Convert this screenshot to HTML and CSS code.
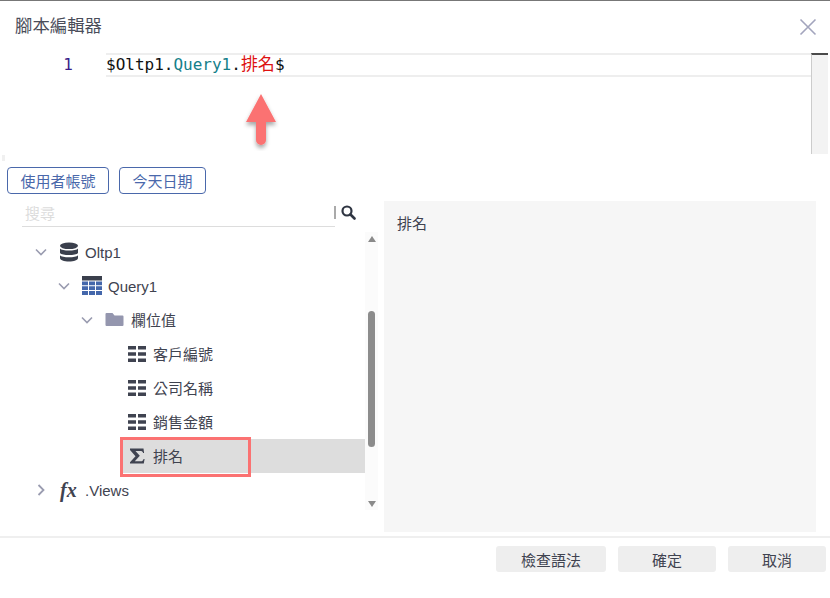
FILE: index.html
```html
<!DOCTYPE html>
<html lang="zh-Hant">
<head>
<meta charset="utf-8">
<title>腳本編輯器</title>
<link rel="stylesheet" href="styles.css">
</head>
<body>
<div class="dialog">
  <header class="head">
    <h1 class="title">腳本編輯器</h1>
    <svg class="close" width="18" height="18" viewBox="0 0 18 18"><path d="M1.500 1.500 16.500 16.500M16.500 1.500 1.500 16.500" stroke="#a3a5bd" stroke-width="1.600" fill="none"/></svg>
  </header>
  <section class="editor">
    <div class="gutter">1</div>
    <div class="lines">
      <div class="line"><span class="plain">$Oltp1.</span><span class="teal">Query1</span><span class="plain">.</span><span class="red">排名</span><span class="plain">$</span></div>
    </div>
    <div class="vbar"></div>
  </section>
  <div class="tools">
    <button class="chip chip-a">使用者帳號</button>
    <button class="chip chip-b">今天日期</button>
  </div>
  <main class="body">
    <div class="left">
      <div class="search">
        <div class="search-input">搜尋</div>
        <div class="search-sep"></div>
        <svg class="search-icon" width="15" height="15" viewBox="0 0 15 15"><circle cx="6" cy="6" r="4.500" fill="none" stroke="#2f3542" stroke-width="2.200"/><path d="M9.500 9.500 13.500 13.500" stroke="#2f3542" stroke-width="2.600" stroke-linecap="round"/></svg>
      </div>
      <div class="tree-wrap">
        <ul class="tree">
          <li class="node lvl0">
            <svg class="caret" width="12" height="12" viewBox="0 0 12 12"><path d="M1 3.500 6 8.500 11 3.500" fill="none" stroke="#9a9cb0" stroke-width="1.600"/></svg>
            <svg class="icon" width="20" height="20" viewBox="0 0 20 20"><g fill="#3a3f4c"><ellipse cx="10" cy="3.800" rx="9" ry="3.300"/><path d="M1 6.500C3 9.300 17 9.300 19 6.500V11C17 13.800 3 13.800 1 11Z"/><path d="M1 13.200C3 16 17 16 19 13.200V16C19 18 15 19.500 10 19.500S1 18 1 16Z"/></g></svg>
            <span>Oltp1</span>
          </li>
          <li class="node lvl1">
            <svg class="caret" width="12" height="12" viewBox="0 0 12 12"><path d="M1 3.500 6 8.500 11 3.500" fill="none" stroke="#9a9cb0" stroke-width="1.600"/></svg>
            <svg class="icon" width="20" height="20" viewBox="0 0 20 20"><rect y="0" width="20" height="4.500" fill="#3a3f4c"/><path fill="#4467ab" d="M0 5.500h6v3.800H0zM7 5.500h6v3.800H7zM14 5.500h6v3.800h-6zM0 10.300h6v3.800H0zM7 10.300h6v3.800H7zM14 10.300h6v3.800h-6zM0 15.100h6v3.900H0zM7 15.100h6v3.900H7zM14 15.100h6v3.900h-6z"/></svg>
            <span>Query1</span>
          </li>
          <li class="node lvl2">
            <svg class="caret" width="12" height="12" viewBox="0 0 12 12"><path d="M1 3.500 6 8.500 11 3.500" fill="none" stroke="#9a9cb0" stroke-width="1.600"/></svg>
            <svg class="icon" width="20" height="20" viewBox="0 0 20 20"><path fill="#9496ae" d="M1.500 3h6l2 2.500h8a1 1 0 0 1 1 1V15a1 1 0 0 1-1 1h-16a1 1 0 0 1-1-1V4a1 1 0 0 1 1-1z"/></svg>
            <span class="cjk">欄位值</span>
          </li>
          <li class="node lvl3">
            <svg class="icon" width="20" height="20" viewBox="0 0 20 20"><path fill="#3f4350" d="M1 2h8v3.500H1zM11 2h8v3.500h-8zM1 8.200h8v3.500H1zM11 8.200h8v3.500h-8zM1 14.500h8V18H1zM11 14.500h8V18h-8z"/></svg>
            <span class="cjk">客戶編號</span>
          </li>
          <li class="node lvl3">
            <svg class="icon" width="20" height="20" viewBox="0 0 20 20"><path fill="#3f4350" d="M1 2h8v3.500H1zM11 2h8v3.500h-8zM1 8.200h8v3.500H1zM11 8.200h8v3.500h-8zM1 14.500h8V18H1zM11 14.500h8V18h-8z"/></svg>
            <span class="cjk">公司名稱</span>
          </li>
          <li class="node lvl3">
            <svg class="icon" width="20" height="20" viewBox="0 0 20 20"><path fill="#3f4350" d="M1 2h8v3.500H1zM11 2h8v3.500h-8zM1 8.200h8v3.500H1zM11 8.200h8v3.500h-8zM1 14.500h8V18H1zM11 14.500h8V18h-8z"/></svg>
            <span class="cjk">銷售金額</span>
          </li>
          <li class="node selected">
            <svg class="icon" width="20" height="20" viewBox="0 0 20 20"><path fill="#3f4350" d="M3 2.500H16.500l.6 4.500h-1c-.4-1.400-1.200-2-3-2H8.500l4.300 4.800-5 5.500h5.800c1.800 0 2.500-.7 3-2.300h1L16.800 17.500H3v-1.300L8.500 10.300 3 4z"/></svg>
            <span class="cjk">排名</span>
          </li>
          <li class="node lvl0">
            <svg class="caret caret-fx" width="12" height="12" viewBox="0 0 12 12"><path d="M3.500 1 8.500 6 3.500 11" fill="none" stroke="#9a9cb0" stroke-width="1.800"/></svg>
            <span class="fx">fx</span>
            <span>.Views</span>
          </li>
        </ul>
        <div class="tree-bar">
          <span class="tri-up"></span>
          <div class="track"><div class="thumb"></div></div>
          <span class="tri-down"></span>
        </div>
      </div>
    </div>
    <aside class="panel">排名</aside>
  </main>
  <footer class="foot">
    <button class="act act-check">檢查語法</button>
    <button class="act act-ok">確定</button>
    <button class="act act-ok">取消</button>
  </footer>
  <div class="highlight"></div>
  <div class="speck"></div>
  <svg class="arrow" width="36" height="60" viewBox="0 0 36 60"><defs><filter id="s" x="-40%" y="-20%" width="180%" height="150%"><feDropShadow dx="0" dy="3" stdDeviation="2" flood-color="#000" flood-opacity=".35"/></filter></defs><path filter="url(#s)" fill="#fb7272" d="M18 3 33 31H23V49a5 5 0 0 1-10 0V31H3z"/></svg>
</div>
</body>
</html>
```
FILE: styles.css
```css
* { box-sizing: border-box; }
html, body { margin: 0; padding: 0; background: #fff; }
.dialog {
  position: relative;
  width: 830px;
  height: 598px;
  overflow: hidden;
  background: #fff;
  border-top: 1px solid #777;
  font-family: "Liberation Sans", "Noto Sans CJK TC", sans-serif;
  color: #3f4350;
  font-size: 15px;
}
.head {
  height: 52px;
  display: flex;
  justify-content: space-between;
  align-items: center;
  padding: 0 13px 5px 15px;
}
.title { margin: 0; font-size: 17.400px; font-weight: 400; color: #4a4d5a; }
.close { display: block; margin-top: 5px; }
.editor {
  height: 101px;
  display: flex;
  padding-right: 2px;
}
.gutter {
  width: 106px;
  padding: 2px 33px 0 0;
  text-align: right;
  font: 16px/20px "DejaVu Sans Mono", monospace;
  color: #3a1d8a;
}
.lines { flex: 1; }
.line {
  height: 24px;
  border-top: 2px solid #eee;
  border-bottom: 2px solid #eee;
  font: 16px/19px "DejaVu Sans Mono", "Noto Sans CJK TC", monospace;
  white-space: nowrap;
}
.plain { color: #111; }
.teal { color: #15808a; }
.red { color: #dd1111; font-size: 17px; }
.vbar {
  width: 17px;
  background: #f3f3f3;
  border-left: 1px solid #ccc;
  border-top: 2px solid #4a4a4a;
}
.tools {
  display: flex;
  gap: 10px;
  padding: 13px 0 0 7px;
  height: 47px;
}
.chip {
  height: 27px;
  padding: 0 0 1px;
  background: #fff;
  border: 1px solid #4a68ab;
  border-radius: 4px;
  color: #4a68ab;
  font: 15px "Liberation Sans", "Noto Sans CJK TC", sans-serif;
}
.chip-a { width: 102px; }
.chip-b { width: 87px; }
.body {
  display: flex;
  height: 331px;
  padding-right: 14px;
}
.left { width: 384px; flex: none; padding-left: 22px; }
.search {
  display: flex;
  align-items: center;
  height: 26px;
}
.search-input {
  width: 313px;
  height: 26px;
  line-height: 25px;
  padding-left: 3px;
  border-bottom: 1px solid #ddd;
  color: #dcdcdc;
}
.search-sep { width: 2px; height: 13px; background: #aaa; margin-left: -1px; margin-top: -3px; }
.search-icon { margin: -3px 0 0 5px; }
.tree-wrap {
  display: flex;
  margin-left: -22px;
  margin-top: 5px;
  height: 278px;
}
.tree {
  list-style: none;
  margin: 0;
  padding: 3px 0 0;
  width: 365px;
  flex: none;
}
.node {
  height: 34px;
  display: flex;
  align-items: center;
  color: #3f4350;
  white-space: nowrap;
}
.cjk { position: relative; top: -1px; }
.caret { width: 12px; height: 12px; flex: none; margin-right: 12px; display: block; }
.caret-fx { margin-right: 13px; }
.icon { flex: none; margin-right: 6px; }
.lvl0 { padding-left: 35px; }
.lvl1 { padding-left: 58px; }
.lvl2 { padding-left: 81px; }
.lvl3 { padding-left: 127px; }
.selected { background: #ddd; margin-left: 123px; padding-left: 4px; }
.fx {
  width: 25px;
  font: italic 700 20px "Liberation Serif", serif;
  color: #3f4350;
  flex: none;
}
.tree-bar {
  width: 13px;
  flex: none;
  background: #fbfbfb;
  display: flex;
  flex-direction: column;
  align-items: center;
  padding: 4px 0 3px;
}
.tri-up, .tri-down { width: 0; height: 0; border-left: 4.500px solid transparent; border-right: 4.500px solid transparent; flex: none; }
.tri-up { border-bottom: 6px solid #8a8a8a; }
.tri-down { border-top: 6px solid #8a8a8a; }
.track { flex: 1; width: 7px; padding-top: 69px; }
.thumb { width: 7px; height: 136px; background: #8c8c8c; border-radius: 4px; }
.panel {
  flex: 1;
  background: #f6f6f6;
  padding: 13px;
  line-height: 20px;
  color: #3f4350;
}
.foot {
  margin-top: 4px;
  border-top: 2px solid #efefef;
  padding: 8px 4px 0 0;
  display: flex;
  justify-content: flex-end;
  gap: 12px;
}
.act {
  height: 26px;
  padding: 0;
  border: 0;
  border-radius: 3px;
  background: #eee;
  color: #3f4350;
  font: 15px "Liberation Sans", "Noto Sans CJK TC", sans-serif;
}
.act-check { width: 110px; }
.act-ok { width: 98px; }
.highlight {
  position: absolute;
  left: 120px;
  top: 436px;
  width: 131px;
  height: 40px;
  border: 3px solid #fb7272;
}
.speck { position: absolute; left: 2px; top: 154px; width: 3px; height: 6px; background: #f0f0f0; }
.arrow { position: absolute; left: 243px; top: 90px; }
```
